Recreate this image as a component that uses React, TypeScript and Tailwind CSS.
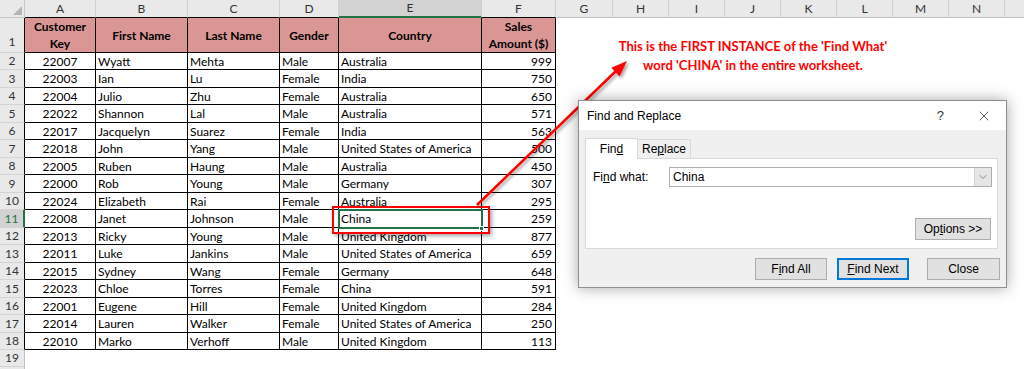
import React from "react";
import { X, ChevronDown } from "lucide-react";

const COLW = [
  "w-[71px]",
  "w-[92px]",
  "w-[92px]",
  "w-[59px]",
  "w-[143px]",
  "w-[74px]",
  "w-[57px]",
  "w-[56px]",
  "w-[56px]",
  "w-[56px]",
  "w-[56px]",
  "w-[56px]",
  "w-[56px]",
  "w-[56px]",
  "w-[60px]",
];
const LETTERS = ["A", "B", "C", "D", "E", "F", "G", "H", "I", "J", "K", "L", "M", "N", ""];

const DATA: [string, string, string, string, string, string][] = [
  ["22007", "Wyatt", "Mehta", "Male", "Australia", "999"],
  ["22003", "Ian", "Lu", "Female", "India", "750"],
  ["22004", "Julio", "Zhu", "Female", "Australia", "650"],
  ["22022", "Shannon", "Lal", "Male", "Australia", "571"],
  ["22017", "Jacquelyn", "Suarez", "Female", "India", "563"],
  ["22018", "John", "Yang", "Male", "United States of America", "500"],
  ["22005", "Ruben", "Haung", "Male", "Australia", "450"],
  ["22000", "Rob", "Young", "Male", "Germany", "307"],
  ["22024", "Elizabeth", "Rai", "Female", "Australia", "295"],
  ["22008", "Janet", "Johnson", "Male", "China", "259"],
  ["22013", "Ricky", "Young", "Male", "United Kingdom", "877"],
  ["22011", "Luke", "Jankins", "Male", "United States of America", "659"],
  ["22015", "Sydney", "Wang", "Female", "Germany", "648"],
  ["22023", "Chloe", "Torres", "Female", "China", "591"],
  ["22001", "Eugene", "Hill", "Female", "United Kingdom", "284"],
  ["22014", "Lauren", "Walker", "Female", "United States of America", "250"],
  ["22010", "Marko", "Verhoff", "Male", "United Kingdom", "113"],
];

const HEADERS = ["Customer Key", "First Name", "Last Name", "Gender", "Country", "Sales Amount ($)"];

function RowNum({ n, selected, inTable, tall }: { n: string; selected?: boolean; inTable?: boolean; tall?: boolean }) {
  return (
    <div
      className={
        "w-[25px] shrink-0 h-full flex justify-center border-b border-[#d4d4d4] " +
        (tall ? "items-end pb-[1px] " : "items-center ") +
        (selected
          ? "bg-[#d2d2d2] text-[#217346] border-r-2 border-r-[#217346]"
          : "bg-[#e9e9e9] text-[#333] border-r " + (inTable ? "border-r-black" : "border-r-[#c0c0c0]"))
      }
    >
      {n}
    </div>
  );
}

export default function App() {
  const heights = ["h-[17px]", "h-[18px]"];
  return (
    <div
      className="relative w-[1024px] h-[369px] overflow-hidden bg-white text-black"
      style={{ fontFamily: "Lato, 'Liberation Sans', sans-serif" }}
    >
      {/* Column header row */}
      <div className="flex h-[18px] text-[12px] text-[#333]">
        <div className="w-[25px] shrink-0 h-full bg-[#e9e9e9] border-r border-b border-[#c8c8c8] relative">
          <svg className="absolute right-[2px] bottom-[2px]" width="9" height="9" viewBox="0 0 9 9">
            <polygon points="9,0 9,9 0,9" fill="#b4b4b4" />
          </svg>
        </div>
        {LETTERS.map((l, i) => (
          <div
            key={i}
            className={
              COLW[i] +
              " shrink-0 h-full flex items-center justify-center border-r border-[#d0d0d0] " +
              (i === 4
                ? "bg-[#d2d2d2] border-b-2 border-b-[#217346]"
                : i < 6
                ? "bg-[#e9e9e9] border-b border-b-black"
                : "bg-[#e9e9e9] border-b border-b-[#c0c0c0]")
            }
          >
            {l}
          </div>
        ))}
      </div>

      {/* Header row 1 */}
      <div className="flex h-[35px] text-[12px]">
        <RowNum n="1" inTable tall />
        {HEADERS.map((h, i) => (
          <div
            key={i}
            className={
              COLW[i] +
              " shrink-0 h-full bg-[#da9694] border-r border-b border-black flex items-center justify-center text-center font-bold leading-[17px] px-[2px]"
            }
          >
            {h}
          </div>
        ))}
        <div className="flex-1" />
      </div>

      {/* Data rows */}
      {DATA.map((r, ri) => (
        <div key={ri} className={"flex text-[12px] " + heights[ri % 2]}>
          <RowNum n={String(ri + 2)} inTable selected={ri === 9} />
          {r.map((c, ci) => (
            <div
              key={ci}
              className={
                COLW[ci] +
                " shrink-0 h-full border-r border-b border-black flex items-center pt-[1px] whitespace-nowrap overflow-hidden " +
                (ci === 0 ? "justify-center" : ci === 5 ? "justify-end pr-[3px]" : "pl-[2px]")
              }
            >
              {c}
            </div>
          ))}
          <div className="flex-1" />
        </div>
      ))}

      {/* Empty rows */}
      <div className="flex h-[17px] text-[12px]">
        <RowNum n="19" />
        <div className="flex-1" />
      </div>
      <div className="flex h-[18px] text-[12px]">
        <RowNum n="" />
        <div className="flex-1" />
      </div>

      {/* Selected cell E11 */}
      <div className="absolute left-[338px] top-[209px] w-[145px] h-[20px] border-2 border-[#217346]" />
      <div className="absolute left-[479px] top-[226px] w-[5px] h-[5px] bg-[#217346] border border-white" />

      {/* Red highlight rectangle */}
      <div className="absolute left-[332px] top-[206px] w-[158px] h-[28px] border-2 border-[#ff0000] shadow-[2px_2px_4px_rgba(0,0,0,0.35)]" />

      {/* Arrow */}
      <svg className="absolute left-0 top-0 pointer-events-none" width="1024" height="369" viewBox="0 0 1024 369">
        <defs>
          <filter id="sh" x="-20%" y="-20%" width="140%" height="140%">
            <feDropShadow dx="2" dy="2" stdDeviation="1.5" floodColor="#000" floodOpacity="0.35" />
          </filter>
        </defs>
        <g filter="url(#sh)">
          <line x1="477" y1="205" x2="616" y2="71" stroke="#ff0000" strokeWidth="2.5" />
          <polygon points="627,61 619.6,76.4 611.3,67.7" fill="#ff0000" />
        </g>
      </svg>

      {/* Annotation */}
      <div className="absolute left-[592px] top-[37px] w-[322px] text-center text-[13px] leading-[19px] font-bold text-[#ff0000]">
        This is the FIRST INSTANCE of the 'Find What'
        <br />
        word 'CHINA' in the entire worksheet.
      </div>

      {/* Dialog */}
      <div
        className="absolute left-[578px] top-[100px] w-[429px] h-[188px] bg-[#f0f0f0] border border-[#8f8f8f] shadow-[0_0_14px_rgba(0,0,0,0.35)] text-[12px] text-black"
        style={{ fontFamily: "'Liberation Sans', Arial, sans-serif" }}
      >
        <div className="h-[29px] bg-white flex items-center pl-[8px] pr-[14px]">
          <span className="flex-1">Find and Replace</span>
          <span className="mr-[32px] text-[13px] text-[#333]">?</span>
          <X size={16} strokeWidth={1.2} color="#333" />
        </div>
        <div className="px-[6px] pt-[7px]">
          <div className="flex items-end h-[21px]">
            <div className="w-[53px] h-[21px] bg-white border border-[#d9d9d9] border-b-0 flex items-center justify-center relative z-10 -mb-px">
              <span>
                Fin<u>d</u>
              </span>
            </div>
            <div className="w-[53px] h-[19px] bg-[#f0f0f0] border border-[#d9d9d9] border-l-0 border-b-0 flex items-center justify-center">
              <span>
                Re<u>p</u>lace
              </span>
            </div>
          </div>
          <div className="w-[413px] h-[91px] bg-white border border-[#d9d9d9] flex flex-col">
            <div className="flex items-center pt-[8px] pl-[7px]">
              <span className="w-[76px]">
                Fi<u>n</u>d what:
              </span>
              <div className="w-[323px] h-[20px] border border-[#abadb3] flex items-center">
                <span className="flex-1 pl-[3px]">China</span>
                <div className="w-[17px] h-full bg-[#e6e6e6] border-l border-[#cfcfcf] flex items-center justify-center">
                  <ChevronDown size={12} strokeWidth={1.3} color="#555" />
                </div>
              </div>
            </div>
            <div className="flex-1" />
            <div className="flex justify-end pr-[6px] pb-[8px]">
              <div className="w-[76px] h-[22px] bg-[#e1e1e1] border border-[#adadad] flex items-center justify-center">
                <span>
                  Op<u>t</u>ions &gt;&gt;
                </span>
              </div>
            </div>
          </div>
          <div className="flex justify-end mt-[9px] pr-[0px]">
            <div className="w-[72px] h-[22px] bg-[#e1e1e1] border border-[#adadad] flex items-center justify-center">
              <span>
                F<u>i</u>nd All
              </span>
            </div>
            <div className="w-[72px] h-[22px] ml-[10px] bg-[#e1e1e1] border-2 border-[#0078d7] flex items-center justify-center">
              <span>
                <u>F</u>ind Next
              </span>
            </div>
            <div className="w-[73px] h-[22px] ml-[18px] bg-[#e1e1e1] border border-[#adadad] flex items-center justify-center">
              Close
            </div>
          </div>
        </div>
      </div>
    </div>
  );
}
